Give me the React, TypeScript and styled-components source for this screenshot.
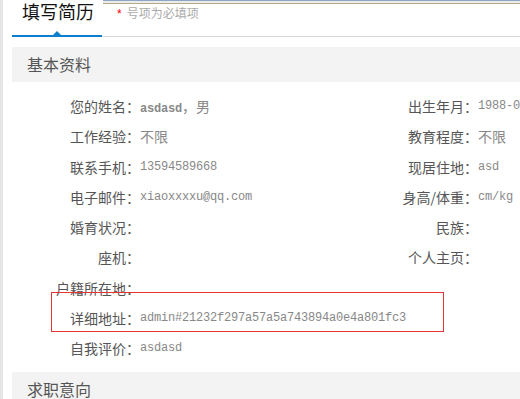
import React from 'react';
import styled, { createGlobalStyle } from 'styled-components';

const GlobalStyle = createGlobalStyle`
  html, body {
    margin: 0;
    padding: 0;
    background: #fff;
  }
  body {
    font-family: "Noto Sans CJK SC", "Liberation Sans", sans-serif;
    overflow: hidden;
  }
`;

const Page = styled.div`
  position: relative;
  min-height: 399px;
  border-left: 3px solid #e6e6e6;
  padding-left: 9px;
  overflow: hidden;
`;

const TopEdge = styled.div`
  position: absolute;
  top: 0;
  left: 100px;
  right: 0;
  height: 2px;
  border-top: 1px solid #8ea6c6;
  border-bottom: 1px solid #b3ab8c;
  background: #ebebeb;
`;

const TabBar = styled.div`
  display: flex;
  align-items: flex-start;
  height: 36px;
  border-bottom: 1px solid #d6d6d6;
`;

const Tab = styled.div`
  position: relative;
  box-sizing: border-box;
  width: 90px;
  height: 37px;
  padding-left: 10px;
  border-bottom: 2px solid #0c7fcc;
  font-size: 18px;
  line-height: 22px;
  color: #111;
  &::after {
    content: '';
    position: absolute;
    left: 41px;
    bottom: 0;
    border-left: 4px solid transparent;
    border-right: 4px solid transparent;
    border-bottom: 4px solid #0c7fcc;
  }
`;

const Hint = styled.div`
  margin-left: 15px;
  font-size: 12px;
  line-height: 26px;
  color: #aaa;
  .star {
    color: #f00;
    font-family: "Liberation Sans", sans-serif;
    margin-right: 5px;
  }
`;

const SectionHead = styled.div<{ $gap: number }>`
  margin-top: ${(p) => p.$gap}px;
  height: 35px;
  padding-left: 15px;
  background: #f3f3f3;
  font-size: 16px;
  line-height: 35px;
  color: #555;
`;

const Body = styled.div`
  padding-top: 9px;
`;

const Row = styled.div`
  display: flex;
  align-items: center;
  height: 30.25px;
`;

const Field = styled.div<{ $width?: number }>`
  display: flex;
  align-items: center;
  flex: ${(p) => (p.$width ? `0 0 ${p.$width}px` : '1')};
  white-space: nowrap;
`;

const Label = styled.span`
  flex: 0 0 128px;
  text-align: right;
  font-size: 14px;
  color: #555;
`;

const Value = styled.span`
  font-family: "Liberation Mono", monospace;
  font-size: 12px;
  letter-spacing: -0.2px;
  color: #888;
  b {
    font-weight: 700;
  }
  .cjk {
    font-family: "Noto Sans CJK SC", sans-serif;
    font-size: 14px;
    letter-spacing: 0;
  }
`;

const Highlight = styled.div`
  position: absolute;
  left: 48px;
  top: 292px;
  width: 391px;
  height: 38px;
  border: 1px solid #e63434;
  pointer-events: none;
`;

type Item = { label: string; value?: React.ReactNode };

const rows: [Item, Item | null][] = [
  [
    {
      label: '您的姓名：',
      value: (
        <>
          <b>asdasd</b>
          <span className="cjk">，男</span>
        </>
      ),
    },
    { label: '出生年月：', value: '1988-06' },
  ],
  [
    { label: '工作经验：', value: <span className="cjk">不限</span> },
    { label: '教育程度：', value: <span className="cjk">不限</span> },
  ],
  [
    { label: '联系手机：', value: '13594589668' },
    { label: '现居住地：', value: 'asd' },
  ],
  [
    { label: '电子邮件：', value: 'xiaoxxxxu@qq.com' },
    { label: '身高/体重：', value: 'cm/kg' },
  ],
  [{ label: '婚育状况：' }, { label: '民族：' }],
  [{ label: '座机：' }, { label: '个人主页：' }],
  [{ label: '户籍所在地：' }, null],
  [{ label: '详细地址：', value: 'admin#21232f297a57a5a743894a0e4a801fc3' }, null],
  [{ label: '自我评价：', value: 'asdasd' }, null],
];

const App: React.FC = () => {
  return (
    <>
      <GlobalStyle />
      <Page>
        <TopEdge />
        <TabBar>
          <Tab>填写简历</Tab>
          <Hint>
            <span className="star">*</span>号项为必填项
          </Hint>
        </TabBar>

        <SectionHead $gap={10}>基本资料</SectionHead>
        <Body>
          {rows.map(([left, right], i) => (
            <Row key={i}>
              <Field $width={338}>
                <Label>{left.label}</Label>
                <Value>{left.value}</Value>
              </Field>
              {right && (
                <Field>
                  <Label>{right.label}</Label>
                  <Value>{right.value}</Value>
                </Field>
              )}
            </Row>
          ))}
        </Body>

        <SectionHead $gap={9}>求职意向</SectionHead>
        <Highlight />
      </Page>
    </>
  );
};

export default App;
